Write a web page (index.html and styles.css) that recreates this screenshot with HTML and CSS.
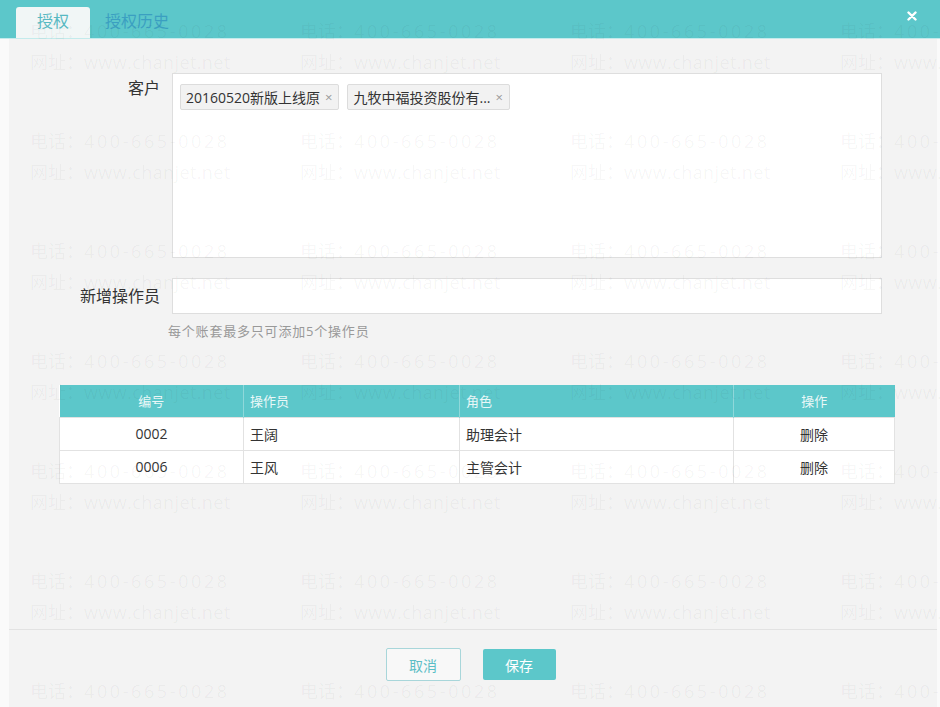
FILE: index.html
```html
<!DOCTYPE html>
<html lang="zh-CN">
<head>
<meta charset="utf-8">
<title>授权</title>
<link rel="stylesheet" href="styles.css">
</head>
<body>
<div class="dialog">
  <div class="header">
    <div class="tabs">
      <div class="tab active">授权</div>
      <div class="tab">授权历史</div>
    </div>
    <div class="close">
      <svg width="10" height="10" viewBox="0 0 10 10"><path d="M1.5 1.5 L8.5 8.5 M8.5 1.5 L1.5 8.5" stroke="#ffffff" stroke-width="2.4" stroke-linecap="round"/></svg>
    </div>
  </div>
  <div class="content">
    <div class="main">
      <div class="form-row">
        <div class="label label-top">客户</div>
        <div class="customer-box">
          <span class="tag">20160520新版上线原<span class="tag-x">×</span></span>
          <span class="tag">九牧中福投资股份有...<span class="tag-x">×</span></span>
        </div>
      </div>
      <div class="form-row row-center second">
        <div class="label">新增操作员</div>
        <div class="input"></div>
      </div>
      <div class="help">每个账套最多只可添加5个操作员</div>
      <table class="grid">
        <colgroup>
          <col class="c1"><col class="c2"><col class="c3"><col class="c4">
        </colgroup>
        <thead>
          <tr><th class="center">编号</th><th>操作员</th><th>角色</th><th class="center">操作</th></tr>
        </thead>
        <tbody>
          <tr><td class="center">0002</td><td>王阔</td><td>助理会计</td><td class="center">删除</td></tr>
          <tr><td class="center">0006</td><td>王风</td><td>主管会计</td><td class="center">删除</td></tr>
        </tbody>
      </table>
    </div>
    <div class="footer">
      <button class="btn btn-cancel">取消</button>
      <button class="btn btn-save">保存</button>
    </div>
  </div>
</div>
<div class="watermark">
  <div class="wm-grid">
    <div class="wm"><div>电话：<span class="num">400-665-0028</span></div><div>网址：<span class="url">www.chanjet.net</span></div></div>
    <div class="wm"><div>电话：<span class="num">400-665-0028</span></div><div>网址：<span class="url">www.chanjet.net</span></div></div>
    <div class="wm"><div>电话：<span class="num">400-665-0028</span></div><div>网址：<span class="url">www.chanjet.net</span></div></div>
    <div class="wm"><div>电话：<span class="num">400-665-0028</span></div><div>网址：<span class="url">www.chanjet.net</span></div></div>
    <div class="wm"><div>电话：<span class="num">400-665-0028</span></div><div>网址：<span class="url">www.chanjet.net</span></div></div>
    <div class="wm"><div>电话：<span class="num">400-665-0028</span></div><div>网址：<span class="url">www.chanjet.net</span></div></div>
    <div class="wm"><div>电话：<span class="num">400-665-0028</span></div><div>网址：<span class="url">www.chanjet.net</span></div></div>
    <div class="wm"><div>电话：<span class="num">400-665-0028</span></div><div>网址：<span class="url">www.chanjet.net</span></div></div>
    <div class="wm"><div>电话：<span class="num">400-665-0028</span></div><div>网址：<span class="url">www.chanjet.net</span></div></div>
    <div class="wm"><div>电话：<span class="num">400-665-0028</span></div><div>网址：<span class="url">www.chanjet.net</span></div></div>
    <div class="wm"><div>电话：<span class="num">400-665-0028</span></div><div>网址：<span class="url">www.chanjet.net</span></div></div>
    <div class="wm"><div>电话：<span class="num">400-665-0028</span></div><div>网址：<span class="url">www.chanjet.net</span></div></div>
    <div class="wm"><div>电话：<span class="num">400-665-0028</span></div><div>网址：<span class="url">www.chanjet.net</span></div></div>
    <div class="wm"><div>电话：<span class="num">400-665-0028</span></div><div>网址：<span class="url">www.chanjet.net</span></div></div>
    <div class="wm"><div>电话：<span class="num">400-665-0028</span></div><div>网址：<span class="url">www.chanjet.net</span></div></div>
    <div class="wm"><div>电话：<span class="num">400-665-0028</span></div><div>网址：<span class="url">www.chanjet.net</span></div></div>
    <div class="wm"><div>电话：<span class="num">400-665-0028</span></div><div>网址：<span class="url">www.chanjet.net</span></div></div>
    <div class="wm"><div>电话：<span class="num">400-665-0028</span></div><div>网址：<span class="url">www.chanjet.net</span></div></div>
    <div class="wm"><div>电话：<span class="num">400-665-0028</span></div><div>网址：<span class="url">www.chanjet.net</span></div></div>
    <div class="wm"><div>电话：<span class="num">400-665-0028</span></div><div>网址：<span class="url">www.chanjet.net</span></div></div>
    <div class="wm"><div>电话：<span class="num">400-665-0028</span></div><div>网址：<span class="url">www.chanjet.net</span></div></div>
    <div class="wm"><div>电话：<span class="num">400-665-0028</span></div><div>网址：<span class="url">www.chanjet.net</span></div></div>
    <div class="wm"><div>电话：<span class="num">400-665-0028</span></div><div>网址：<span class="url">www.chanjet.net</span></div></div>
    <div class="wm"><div>电话：<span class="num">400-665-0028</span></div><div>网址：<span class="url">www.chanjet.net</span></div></div>
    <div class="wm"><div>电话：<span class="num">400-665-0028</span></div><div>网址：<span class="url">www.chanjet.net</span></div></div>
    <div class="wm"><div>电话：<span class="num">400-665-0028</span></div><div>网址：<span class="url">www.chanjet.net</span></div></div>
    <div class="wm"><div>电话：<span class="num">400-665-0028</span></div><div>网址：<span class="url">www.chanjet.net</span></div></div>
    <div class="wm"><div>电话：<span class="num">400-665-0028</span></div><div>网址：<span class="url">www.chanjet.net</span></div></div>
  </div>
</div>
</body>
</html>
```
FILE: styles.css
```css
* { box-sizing: border-box; }
html, body {
  margin: 0;
  padding: 0;
}
body {
  width: 940px;
  height: 707px;
  overflow: hidden;
  position: relative;
  background: #fafafa;
  font-family: "Open Sans", "Noto Sans CJK SC", sans-serif;
  color: #333;
}
.dialog {
  display: flex;
  flex-direction: column;
  height: 707px;
}
.header {
  height: 39px;
  flex: none;
  background: #5cc7ca;
  border-bottom: 1px solid #c3ebec;
  display: flex;
  align-items: flex-end;
  justify-content: space-between;
  padding-left: 16px;
}
.tabs {
  display: flex;
  align-items: flex-end;
  height: 100%;
}
.tab {
  height: 31px;
  line-height: 28px;
  font-size: 16px;
  color: #3b9fc1;
  padding: 0 2px;
  margin-left: 13px;
}
.tab.active {
  width: 74px;
  margin-left: 0;
  text-align: center;
  background: #f1f6f6;
  border-radius: 3px 3px 0 0;
  color: #58b9c2;
}
.close {
  align-self: flex-start;
  margin: 11px 23px 0 0;
  height: 10px;
  display: flex;
}
.content {
  flex: 1;
  margin: 0 3px 0 9px;
  background: #f3f3f3;
  display: flex;
  flex-direction: column;
}
.main {
  flex: 1;
  padding-top: 34px;
}
.form-row {
  display: flex;
  align-items: flex-start;
}
.form-row.row-center { align-items: center; }
.form-row.second { margin-top: 20px; }
.label {
  width: 151px;
  text-align: right;
  font-size: 16px;
  line-height: 22px;
  color: #333;
  margin-right: 12px;
}
.label-top { padding-top: 4px; }
.customer-box {
  width: 710px;
  height: 185px;
  background: #fff;
  border: 1px solid #dedede;
  padding: 10px 7px;
  display: flex;
  align-items: flex-start;
  gap: 8px;
}
.tag {
  display: inline-flex;
  align-items: center;
  height: 26px;
  padding: 0 6px 0 5px;
  background: #f2f2f2;
  border: 1px solid #dcdcdc;
  border-radius: 2px;
  font-size: 14px;
  color: #333;
  white-space: nowrap;
}
.tag-x {
  color: #9a9a9a;
  font-size: 13px;
  margin-left: 5px;
}
.input {
  width: 710px;
  height: 36px;
  background: #fff;
  border: 1px solid #dedede;
}
.help {
  margin-top: 9px;
  padding-left: 159px;
  font-size: 13px;
  line-height: 16px;
  color: #999;
  letter-spacing: 0.8px;
}
.grid {
  margin-top: 46px;
  margin-left: 50px;
  width: 835px;
  border-collapse: collapse;
  table-layout: fixed;
  background: #fff;
  font-size: 13px;
}
.c1 { width: 184px; }
.c2 { width: 216px; }
.c3 { width: 274px; }
.c4 { width: 161px; }
.grid th {
  height: 32px;
  background: #5cc7ca;
  color: #eaf8f8;
  font-weight: normal;
  text-align: left;
  padding: 0 6px;
  border-left: 1px solid #8fd8da;
}
.grid th:first-child { border-left: none; }
.grid td {
  height: 33px;
  padding: 0 6px;
  font-size: 14px;
  color: #333;
  border: 1px solid #e2e2e2;
}
.grid .center { text-align: center; }
.footer {
  height: 78px;
  flex: none;
  border-top: 1px solid #e2e2e2;
  display: flex;
  justify-content: center;
  align-items: flex-start;
  gap: 22px;
  padding-top: 18px;
  padding-right: 5px;
}
.btn {
  font-family: "Open Sans", "Noto Sans CJK SC", sans-serif;
  font-size: 14px;
  border-radius: 2px;
  cursor: pointer;
}
.btn-cancel {
  width: 75px;
  height: 33px;
  background: #f8f8f8;
  border: 1px solid #a8d6da;
  color: #5bbec6;
}
.btn-save {
  width: 73px;
  height: 31px;
  margin-top: 1px;
  background: #5cc7ca;
  border: none;
  color: #fff;
}
.watermark {
  position: absolute;
  top: 0;
  left: 0;
  width: 940px;
  height: 707px;
  overflow: hidden;
  pointer-events: none;
  padding: 15px 0 0 30px;
}
.wm-grid {
  display: grid;
  grid-template-columns: repeat(4, 270px);
  grid-auto-rows: 110px;
  font-family: "Noto Sans CJK SC", sans-serif;
  font-size: 18px;
  line-height: 30px;
  color: rgba(0, 0, 0, 0.045);
  white-space: nowrap;
}
.wm-grid .num {
  font-family: "Open Sans", sans-serif;
  letter-spacing: 2.6px;
}
.wm-grid .url {
  font-family: "Open Sans", sans-serif;
  letter-spacing: 0.4px;
}
```
